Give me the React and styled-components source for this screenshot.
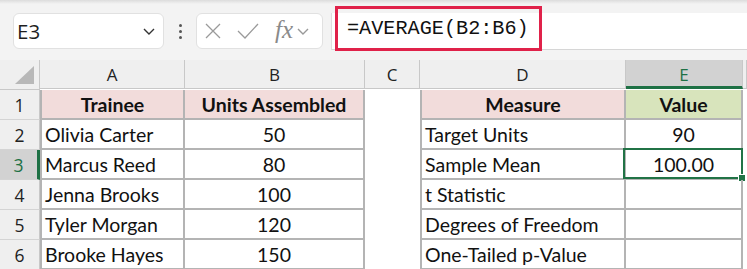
import React from "react";
import styled, { createGlobalStyle } from "styled-components";

const GlobalStyle = createGlobalStyle`
  html, body {
    margin: 0;
    padding: 0;
    background: #ffffff;
  }
  body {
    font-family: Lato, "Open Sans", sans-serif;
  }
`;

const COLS = [145, 180, 55, 206, 117];

const Sheet = styled.div`
  width: 747px;
  height: 269px;
  overflow: hidden;
  background: #ffffff;
`;

const Toolbar = styled.div`
  height: 60px;
  box-sizing: border-box;
  background: linear-gradient(#dcdcdc 0px, #f3f3f3 4px, #f3f3f3 100%);
  display: flex;
  align-items: flex-start;
  padding-top: 13px;
  padding-left: 13px;
`;

const NameBox = styled.div`
  width: 151px;
  height: 36px;
  box-sizing: border-box;
  background: #ffffff;
  border: 1px solid #e1e1e1;
  border-radius: 6px;
  display: flex;
  align-items: center;
  justify-content: space-between;
  padding: 0 7px 0 3px;
  font-family: "Open Sans", sans-serif;
  font-size: 20.5px;
  color: #1f1f1f;
`;

const Dots = styled.div`
  width: 32px;
  height: 36px;
  display: flex;
  flex-direction: column;
  align-items: center;
  justify-content: center;
  gap: 3px;

  span {
    width: 3px;
    height: 3px;
    border-radius: 50%;
    background: #555;
  }
`;

const FxBox = styled.div`
  width: 127px;
  height: 36px;
  box-sizing: border-box;
  background: #ffffff;
  border: 1px solid #e1e1e1;
  border-radius: 6px;
  display: flex;
  align-items: center;
  padding-left: 7px;
`;

const FxText = styled.span`
  font-family: "Liberation Serif", serif;
  font-style: italic;
  font-size: 25px;
  color: #8a8a8a;
  margin-left: 15px;
  margin-top: -2px;
`;

const FormulaWrap = styled.div`
  flex: 1;
  margin-left: 8px;
  height: 36px;
  background: #ffffff;
  border-left: 1px solid #dedede;
  border-bottom: 1px solid #d6d6d6;
  position: relative;
`;

const FormulaBox = styled.div`
  position: absolute;
  left: 3px;
  top: -7px;
  width: 207px;
  height: 45px;
  box-sizing: border-box;
  border: 3px solid #e0224a;
  display: flex;
  align-items: center;
  padding-left: 9px;
  font-family: "Liberation Mono", monospace;
  font-size: 20.2px;
  color: #111;
`;

const Grid = styled.div`
  display: grid;
  grid-template-columns: 40px ${COLS.map((c) => c + "px").join(" ")} 1fr;
  grid-auto-rows: 30px;
  font-family: Lato, "Open Sans", sans-serif;
  color: #111;
`;

const Corner = styled.div`
  height: 29px;
  background: #efefef;
  border-right: 1px solid #c8c8c8;
  border-bottom: 1px solid #c8c8c8;
  position: relative;

  &::after {
    content: "";
    position: absolute;
    right: 5px;
    bottom: 5px;
    border-style: solid;
    border-width: 0 0 18px 19px;
    border-color: transparent transparent #b8b8b8 transparent;
  }
`;

const ColHead = styled.div`
  height: 29px;
  box-sizing: border-box;
  background: ${(p) => (p.active ? "#d2d2d2" : "#efefef")};
  color: ${(p) => (p.active ? "#1e7145" : "#222")};
  border-right: 1px solid #c8c8c8;
  border-bottom: ${(p) => (p.active ? "3px solid #1e7145" : "1px solid #c8c8c8")};
  display: flex;
  align-items: center;
  justify-content: center;
  font-family: "Open Sans", sans-serif;
  font-size: 17px;
  padding-top: ${(p) => (p.active ? "2px" : "0")};
`;

const RowHead = styled.div`
  box-sizing: border-box;
  background: ${(p) => (p.active ? "#d2d2d2" : "#efefef")};
  color: ${(p) => (p.active ? "#1e7145" : "#222")};
  border-right: ${(p) => (p.active ? "3px solid #1e7145" : "1px solid #c8c8c8")};
  border-bottom: 1px solid #d4d4d4;
  display: flex;
  align-items: center;
  justify-content: center;
  font-family: "Open Sans", sans-serif;
  font-size: 17.5px;
`;

const Cell = styled.div`
  box-sizing: border-box;
  position: relative;
  background: ${(p) => p.bg || "transparent"};
  font-weight: ${(p) => (p.bold ? 700 : 400)};
  display: flex;
  align-items: center;
  justify-content: ${(p) => (p.center ? "center" : "flex-start")};
  padding-left: ${(p) => (p.center ? "0" : "3px")};
  font-size: 19.5px;
  white-space: nowrap;
  ${(p) =>
    p.boxed &&
    `
    border-right: 2px solid #b4b4b4;
    border-bottom: 2px solid #b4b4b4;
  `}
  ${(p) => p.first && `border-left: 2px solid #b4b4b4;`}
`;

const Selected = styled.div`
  position: absolute;
  inset: -2px -2px -1px -3px;
  border: 2px solid #217346;
  pointer-events: none;

  &::after {
    content: "";
    position: absolute;
    right: -5px;
    bottom: -5px;
    width: 6px;
    height: 6px;
    background: #217346;
    border: 1px solid #ffffff;
  }
`;

const leftTable = [
  ["Trainee", "Units Assembled"],
  ["Olivia Carter", "50"],
  ["Marcus Reed", "80"],
  ["Jenna Brooks", "100"],
  ["Tyler Morgan", "120"],
  ["Brooke Hayes", "150"],
];

const rightTable = [
  ["Measure", "Value"],
  ["Target Units", "90"],
  ["Sample Mean", "100.00"],
  ["t Statistic", ""],
  ["Degrees of Freedom", ""],
  ["One-Tailed p-Value", ""],
];

const Chevron = ({ color = "#333", size = 14 }) => (
  <svg width={size} height={size} viewBox="0 0 14 14">
    <path d="M2 5 L7 10 L12 5" fill="none" stroke={color} strokeWidth="1.4" />
  </svg>
);

const App = () => {
  return (
    <Sheet>
      <GlobalStyle />
      <Toolbar>
        <NameBox>
          <span>E3</span>
          <Chevron />
        </NameBox>
        <Dots>
          <span />
          <span />
          <span />
        </Dots>
        <FxBox>
          <svg width="18" height="18" viewBox="0 0 18 18">
            <path d="M2 2 L16 16 M16 2 L2 16" stroke="#9a9a9a" strokeWidth="1.3" fill="none" />
          </svg>
          <svg width="24" height="20" viewBox="0 0 24 20" style={{ marginLeft: 14 }}>
            <path d="M2 10 L9 17 L22 3" stroke="#9a9a9a" strokeWidth="1.3" fill="none" />
          </svg>
          <FxText>fx</FxText>
          <span style={{ marginLeft: 3, display: "flex" }}>
            <Chevron color="#999" size={14} />
          </span>
        </FxBox>
        <FormulaWrap>
          <FormulaBox>=AVERAGE(B2:B6)</FormulaBox>
        </FormulaWrap>
      </Toolbar>
      <Grid>
        <Corner />
        {["A", "B", "C", "D", "E"].map((l) => (
          <ColHead key={l} active={l === "E"}>
            {l}
          </ColHead>
        ))}
        <ColHead />
        {leftTable.map((row, i) => (
          <React.Fragment key={i}>
            <RowHead active={i === 2}>{i + 1}</RowHead>
            <Cell boxed first bg={i === 0 ? "#f2dcdb" : undefined} bold={i === 0} center={i === 0}>
              {row[0]}
            </Cell>
            <Cell boxed center bold={i === 0} bg={i === 0 ? "#f2dcdb" : undefined}>
              {row[1]}
            </Cell>
            <Cell />
            <Cell boxed first bg={i === 0 ? "#f2dcdb" : undefined} bold={i === 0} center={i === 0}>
              {rightTable[i][0]}
            </Cell>
            <Cell boxed center bold={i === 0} bg={i === 0 ? "#d8e4bc" : undefined}>
              {rightTable[i][1]}
              {i === 2 && <Selected />}
            </Cell>
            <Cell />
          </React.Fragment>
        ))}
      </Grid>
    </Sheet>
  );
};

export default App;
